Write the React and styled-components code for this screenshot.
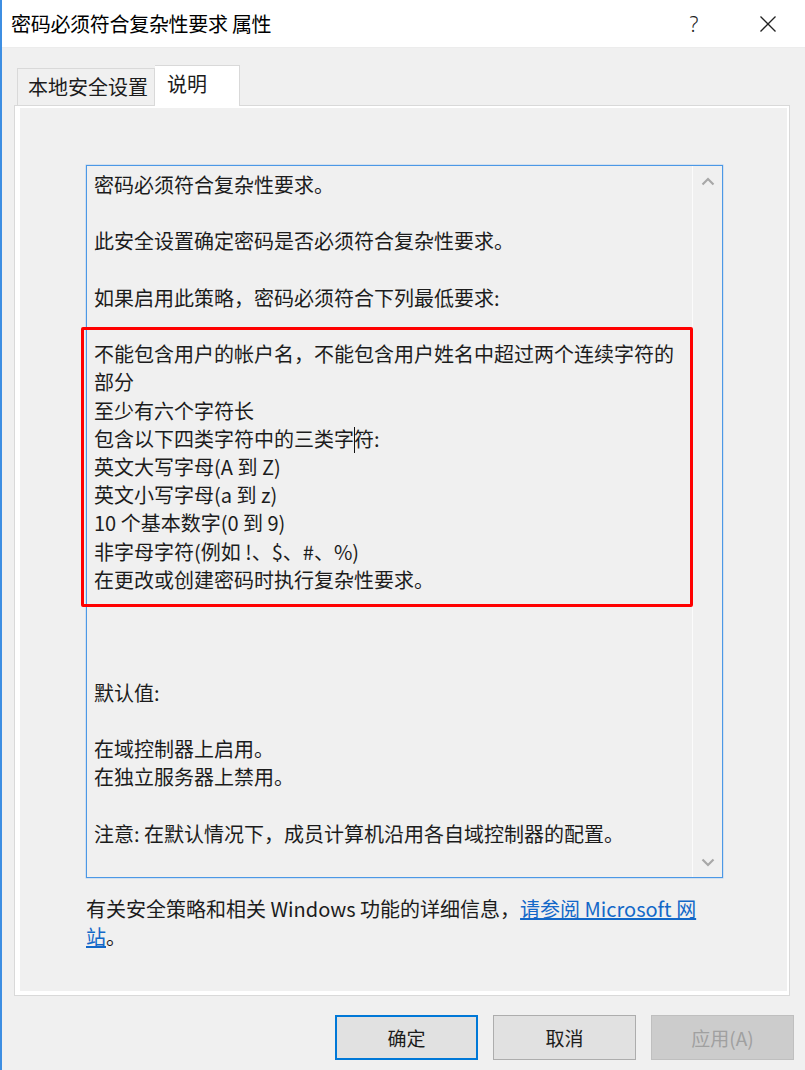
import styled, { createGlobalStyle } from 'styled-components'

const FONT = `"Noto Sans CJK SC", "Noto Sans", sans-serif`;
const FONDO = "#f0f0f0";
const BORDA = "#d9d9d9";
const TEXTO = "#1c1c1c";

const Global = createGlobalStyle`
  html, body {
    margin: 0;
    padding: 0;
    background: ${FONDO};
    font-family: ${FONT};
  }
`;

const Janela = styled.div`
  width: 805px;
  height: 1070px;
  box-sizing: border-box;
  border-left: 2px solid #3d8ee2;
  display: flex;
  flex-direction: column;
  background: ${FONDO};
  overflow: hidden;
`;

const BarraTitulo = styled.div`
  height: 48px;
  flex: none;
  background: #fff;
  border-bottom: 1px solid #ececec;
  box-sizing: border-box;
  display: flex;
  align-items: center;
  padding-left: 9px;
`;

const Titulo = styled.div`
  flex: 1;
  font-size: 20px;
  color: #000;
  letter-spacing: -0.3px;
`;

const Controle = styled.div`
  width: 74px;
  height: 48px;
  display: grid;
  place-items: center;
  font-family: "Noto Sans", sans-serif;
  font-size: 21px;
  font-weight: 300;
  color: #222;
`;

const Corpo = styled.div`
  flex: 1;
  display: flex;
  flex-direction: column;
  padding: 17px 15px 10px 12px;
`;

const Abas = styled.div`
  display: flex;
  align-items: flex-end;
  height: 40px;
  padding-left: 3px;
  position: relative;
  z-index: 1;
`;

const Aba = styled.div`
  box-sizing: border-box;
  height: ${p => (p.$ativa ? "41px" : "37px")};
  margin-bottom: ${p => (p.$ativa ? "-1px" : "0")};
  padding: ${p => (p.$ativa ? "0 12px 6px 12px" : "0 8px 2px 10px")};
  width: ${p => (p.$ativa ? "85px" : "138px")};
  background: ${p => (p.$ativa ? "#fff" : FONDO)};
  border: 1px solid ${BORDA};
  border-bottom: none;
  ${p => (p.$ativa ? "border-left: none;" : "")}
  display: flex;
  align-items: center;
  font-size: 20px;
  color: ${TEXTO};
  white-space: nowrap;
`;

const Painel = styled.div`
  height: 891px;
  box-sizing: border-box;
  border: 1px solid ${BORDA};
  background: #fff;
  padding: 2px 2px 4px 5px;
  display: flex;
`;

const PainelInterno = styled.div`
  flex: 1;
  background: ${FONDO};
  padding: 57px 0 0 66px;
`;

const CaixaTexto = styled.div`
  position: relative;
  width: 637px;
  height: 713px;
  box-sizing: border-box;
  border: 1px solid #4b98e6;
  box-shadow: 0 0 0 0.5px rgba(75, 152, 230, 0.35);
  display: flex;
`;

const AreaTexto = styled.div`
  flex: 1;
  padding: 5px 0 0 7px;
  font-size: 20px;
  line-height: 28.2px;
  color: ${TEXTO};
  white-space: nowrap;
`;

const Linha = styled.div`
  min-height: 28.2px;
`;

const Cursor = styled.span`
  display: inline-block;
  width: 1px;
  height: 26px;
  background: #111;
  vertical-align: -6px;
  margin: 0 -0.5px;
`;

const Rolagem = styled.div`
  width: 29px;
  border-left: 1px solid #fbfbfb;
  display: flex;
  flex-direction: column;
  justify-content: space-between;
  align-items: center;
  padding: 11px 0 10px;
`;

const Destaque = styled.div`
  position: absolute;
  left: -6px;
  top: 161px;
  width: 612px;
  height: 280px;
  box-sizing: border-box;
  border: 3.5px solid #ff0000;
  border-radius: 2px;
  pointer-events: none;
`;

const Rodape = styled.div`
  margin-top: 17px;
  font-size: 20px;
  line-height: 28.2px;
  color: ${TEXTO};
  white-space: nowrap;
`;

const Link = styled.a`
  color: #1368c8;
  text-decoration: underline;
`;

const Botoes = styled.div`
  margin-top: 19px;
  display: flex;
  justify-content: flex-end;
  gap: 15px;
  margin-right: -4px;
`;

const Botao = styled.button`
  width: 143px;
  height: 45px;
  box-sizing: border-box;
  font-family: ${FONT};
  font-size: 19px;
  color: ${TEXTO};
  background: #e1e1e1;
  border: 1px solid #adadad;
  cursor: pointer;
`;

const BotaoPadrao = styled(Botao)`
  border: 2px solid #0078d7;
`;

const BotaoDesativado = styled(Botao)`
  background: #cccccc;
  border-color: #bfbfbf;
  color: #a0a0a0;
  cursor: default;
`;

function Seta({ baixo }) {
  return (
    <svg width="14" height="9" viewBox="0 0 14 9">
      <path
        d={baixo ? "M1.5 1.5 L7 7 L12.5 1.5" : "M1.5 7.5 L7 2 L12.5 7.5"}
        fill="none"
        stroke="#a8a8a8"
        strokeWidth="2.2"
      />
    </svg>
  );
}

const linhas = [
  "密码必须符合复杂性要求。",
  "",
  "此安全设置确定密码是否必须符合复杂性要求。",
  "",
  "如果启用此策略，密码必须符合下列最低要求:",
  "",
  "不能包含用户的帐户名，不能包含用户姓名中超过两个连续字符的",
  "部分",
  "至少有六个字符长",
  "CURSOR",
  "英文大写字母(A 到 Z)",
  "英文小写字母(a 到 z)",
  "10 个基本数字(0 到 9)",
  "非字母字符(例如 !、$、#、%)",
  "在更改或创建密码时执行复杂性要求。",
  "",
  "",
  "",
  "默认值:",
  "",
  "在域控制器上启用。",
  "在独立服务器上禁用。",
  "",
  "注意: 在默认情况下，成员计算机沿用各自域控制器的配置。",
];

export default function App() {
  return (
    <>
      <Global />
      <Janela>
        <BarraTitulo>
          <Titulo>密码必须符合复杂性要求 属性</Titulo>
          <Controle>?</Controle>
          <Controle>
            <svg width="18" height="18" viewBox="0 0 18 18">
              <path d="M1.5 1.5 L16.5 16.5 M16.5 1.5 L1.5 16.5" stroke="#222" strokeWidth="1.3" fill="none" />
            </svg>
          </Controle>
        </BarraTitulo>
        <Corpo>
          <Abas>
            <Aba>本地安全设置</Aba>
            <Aba $ativa>说明</Aba>
          </Abas>
          <Painel>
            <PainelInterno>
              <CaixaTexto>
                <AreaTexto>
                  {linhas.map((l, i) =>
                    l === "CURSOR" ? (
                      <Linha key={i}>包含以下四类字符中的三类字<Cursor />符:</Linha>
                    ) : (
                      <Linha key={i}>{l}</Linha>
                    )
                  )}
                </AreaTexto>
                <Rolagem>
                  <Seta />
                  <Seta baixo />
                </Rolagem>
                <Destaque />
              </CaixaTexto>
              <Rodape>
                有关安全策略和相关 Windows 功能的详细信息，<Link href="#">请参阅 Microsoft 网<br />站</Link>。
              </Rodape>
            </PainelInterno>
          </Painel>
          <Botoes>
            <BotaoPadrao>确定</BotaoPadrao>
            <Botao>取消</Botao>
            <BotaoDesativado disabled>应用(A)</BotaoDesativado>
          </Botoes>
        </Corpo>
      </Janela>
    </>
  );
}
